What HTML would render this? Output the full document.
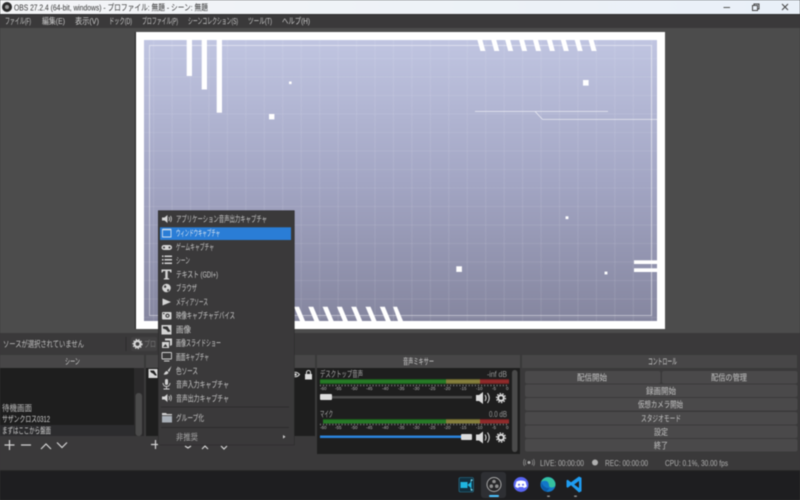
<!DOCTYPE html>
<html lang="ja"><head><meta charset="utf-8"><title>OBS</title>
<style>
html,body{margin:0;padding:0;width:800px;height:500px;overflow:hidden;background:#3a393a}
svg{display:block;filter:blur(.4px)}
text{font-family:"Liberation Sans","Noto Sans CJK JP",sans-serif;font-size:8.5px;fill:#cfcfcf}
.m text{fill:#cbcbcb}
.b text{fill:#c4c4c4;text-anchor:start}
.t text{font-size:4.5px;fill:#b4b4b4}
</style></head><body>
<svg width="800" height="500" viewBox="0 0 800 500" xmlns="http://www.w3.org/2000/svg">
<defs>
<linearGradient id="tb" x1="0" x2="1" y1="0" y2="0"><stop offset="0" stop-color="#f4f5f7"/><stop offset="1" stop-color="#e9f0f8"/></linearGradient>
<linearGradient id="pv" x1="0" x2="0" y1="0" y2="1"><stop offset="0" stop-color="#c0c5e1"/><stop offset=".5" stop-color="#a3a6c4"/><stop offset="1" stop-color="#85869f"/></linearGradient>
<pattern id="gr" x="5.5" y="2.5" width="18.45" height="18.5" patternUnits="userSpaceOnUse"><rect width="1" height="18.5" fill="#fff" fill-opacity=".09"/><rect width="18.45" height="1" fill="#fff" fill-opacity=".08"/></pattern>
</defs>
<rect width="800" height="500" fill="#3a393a"/>
<!-- title bar -->
<rect width="800" height="14" fill="url(#tb)"/>
<rect y="14" width="800" height="1" fill="#2c2c2c"/>
<circle cx="7" cy="7" r="5" fill="#2a2a2a"/><circle cx="7" cy="7" r="2" fill="#999"/>
<text x="14" y="10.5" textLength="194" lengthAdjust="spacingAndGlyphs" style="fill:#333">OBS 27.2.4 (64-bit, windows) - プロファイル: 無題 - シーン: 無題</text>
<path d="M723.5 7.5h6.5" stroke="#555" stroke-width="1"/>
<path d="M752.5 5.5h5v5h-5zM754 5.5V4h5v5h-1.5" fill="none" stroke="#444" stroke-width="1"/>
<path d="M782 4l6 6M788 4l-6 6" stroke="#444" stroke-width="1"/>
<!-- menu bar -->
<g class="m">
<text x="5" y="24" textLength="26" lengthAdjust="spacingAndGlyphs">ファイル(F)</text>
<text x="42" y="24" textLength="23" lengthAdjust="spacingAndGlyphs">編集(E)</text>
<text x="75" y="24" textLength="24" lengthAdjust="spacingAndGlyphs">表示(V)</text>
<text x="109" y="24" textLength="23" lengthAdjust="spacingAndGlyphs">ドック(D)</text>
<text x="142" y="24" textLength="36" lengthAdjust="spacingAndGlyphs">プロファイル(P)</text>
<text x="188" y="24" textLength="50" lengthAdjust="spacingAndGlyphs">シーンコレクション(S)</text>
<text x="248" y="24" textLength="24" lengthAdjust="spacingAndGlyphs">ツール(T)</text>
<text x="282" y="24" textLength="28" lengthAdjust="spacingAndGlyphs">ヘルプ(H)</text>
</g>
<!-- preview area -->
<rect y="28" width="800" height="305" fill="#4c4c4c"/>
<rect x="135" y="32" width="1" height="297" fill="#222"/>
<rect x="136" y="32" width="529" height="297" fill="#fff"/>
<rect x="144" y="40" width="513" height="281" fill="url(#pv)"/>
<rect x="144" y="40" width="513" height="281" fill="url(#gr)"/>
<rect x="149.5" y="45.5" width="502" height="270" fill="none" stroke="#fff" stroke-opacity=".45" stroke-width="1"/>
<g fill="#fff">
<rect x="186.7" y="40" width="5.3" height="36"/><rect x="201.7" y="40" width="5.3" height="49.5"/><rect x="216.7" y="40" width="5.3" height="72.7"/>
<rect x="289" y="81.5" width="2.6" height="2.6"/><rect x="269" y="114" width="5.4" height="5.4"/><rect x="583" y="80" width="5.6" height="5.6"/>
<rect x="456.3" y="266.3" width="5.6" height="5.6"/><rect x="565.6" y="216.3" width="2.8" height="2.8"/><rect x="604.6" y="271.6" width="2.8" height="2.8"/>
<rect x="634" y="260.3" width="23" height="3.7"/><rect x="634" y="268.3" width="23" height="3.7"/>
<path d="M477.4 40h5l3 11h-5zM491.3 40h5l3 11h-5zM505.2 40h5l3 11h-5zM519.1 40h5l3 11h-5zM533 40h5l3 11h-5zM546.9 40h5l3 11h-5zM560.8 40h5l3 11h-5zM574.7 40h5l3 11h-5zM588.6 40h5l3 11h-5z"/>
<path d="M294 306.7h5l6 14.3h-5zM308.3 306.7h5l6 14.3h-5zM322.6 306.7h5l6 14.3h-5zM336.9 306.7h5l6 14.3h-5zM351.2 306.7h5l6 14.3h-5zM365.5 306.7h5l6 14.3h-5zM379.8 306.7h5l6 14.3h-5zM393 306.7h4l6 14.3h-5z"/>
</g>
<path d="M475 111.4h133M535 111.4l7.5 8H657" fill="none" stroke="#fff" stroke-opacity=".7" stroke-width=".8"/>
<!-- context bar -->
<rect y="329" width="800" height="4" fill="#4c4c4c"/>
<rect y="333" width="800" height="137" fill="#3a393a"/>
<text x="3" y="347" textLength="81" lengthAdjust="spacingAndGlyphs" style="fill:#c0c0c0">ソースが選択されていません</text>
<rect x="125.5" y="337" width="1" height="14" fill="#2c2c2c"/>
<rect x="131" y="337" width="26" height="14" rx="2" fill="#424142"/>
<circle cx="137.5" cy="344" r="3" fill="none" stroke="#d8d8d8" stroke-width="2.2"/>
<circle cx="137.5" cy="344" r="4.6" fill="none" stroke="#d8d8d8" stroke-width="1" stroke-dasharray="1.4 1.4"/>
<text x="144" y="347" textLength="12" lengthAdjust="spacingAndGlyphs" style="fill:#777">プロ</text>
<!-- scenes dock -->
<rect x="0" y="355" width="144" height="13" fill="#474647"/>
<text x="65" y="364.5" textLength="15" lengthAdjust="spacingAndGlyphs">シーン</text>
<rect x="0" y="368" width="134" height="68" fill="#1e1e1e"/>
<rect x="134" y="368" width="10" height="68" fill="#2b2a2b"/>
<rect x="135.5" y="393" width="6.5" height="43" rx="3" fill="#4a4a4a"/>
<rect x="0" y="425" width="134" height="11" fill="#2c2c2e"/>
<text x="2" y="411" textLength="30" lengthAdjust="spacingAndGlyphs" style="fill:#bbb">待機画面</text>
<text x="2" y="422" textLength="48" lengthAdjust="spacingAndGlyphs">サザンクロス0312</text>
<text x="2" y="433.5" textLength="49" lengthAdjust="spacingAndGlyphs">まずはここから盤面</text>
<path d="M4.5 445h10M9.5 440v10M21 445h10" stroke="#d4d4d4" stroke-width="1.2"/>
<path d="M41 449l5-5 5 5M57 442.5l5 5 5-5" fill="none" stroke="#d4d4d4" stroke-width="1.2"/>
<!-- sources dock -->
<rect x="146" y="355" width="169" height="13" fill="#474647"/>
<rect x="146" y="368" width="169" height="68" fill="#1e1e1e"/>
<rect x="148.5" y="369" width="9" height="9" fill="#d8d8d8"/><path d="M150 370.5h4l3 5h-2l-2-2-2-1z" fill="#222"/>
<path d="M291.5 374.5q4-4.5 8 0q-4 4.5-8 0z" fill="none" stroke="#ddd" stroke-width="1"/><circle cx="295.5" cy="374.5" r="1.3" fill="#ddd"/>
<rect x="305" y="374" width="7" height="5.5" fill="#ddd"/><path d="M306.5 374v-1.500a2 2 0 0 1 4 0V374" fill="none" stroke="#ddd"/>
<path d="M151 444.5h9M155.5 440v9" stroke="#d4d4d4" stroke-width="1.2"/>
<path d="M185 446l3 2 3-2M202 449l3-3 3 3M221 446l3 3 3-3" fill="none" stroke="#d4d4d4" stroke-width="1.2"/>
<!-- mixer -->
<rect x="317" y="355" width="203" height="13" fill="#474647"/>
<text x="403" y="364.5" textLength="31" lengthAdjust="spacingAndGlyphs">音声ミキサー</text>
<rect x="317" y="368" width="203" height="86" fill="#1e1e1e"/>
<rect x="512" y="370" width="5.5" height="82" rx="2.7" fill="#4a4a4a"/>
<text x="320" y="377" textLength="43" lengthAdjust="spacingAndGlyphs" style="fill:#aaa">デスクトップ音声</text>
<text x="487" y="377" textLength="20" lengthAdjust="spacingAndGlyphs" style="fill:#999">-inf dB</text>
<rect x="320" y="379" width="126" height="5" fill="#267a26"/><rect x="446" y="379" width="34" height="5" fill="#857f3c"/><rect x="480" y="379" width="29" height="5" fill="#8f2b2b"/>
<rect x="320" y="379" width="189" height="1" fill="#000" fill-opacity=".25"/><rect x="320" y="383" width="189" height="1" fill="#000" fill-opacity=".25"/>
<path d="M320 385.5H509" stroke="#999" stroke-width="1.5" stroke-dasharray=".8 2.3"/>
<g class="t">
<text x="320" y="390">-60</text><text x="335" y="390">-55</text><text x="351" y="390">-50</text><text x="366" y="390">-45</text><text x="382" y="390">-40</text><text x="398" y="390">-35</text><text x="413" y="390">-30</text><text x="429" y="390">-25</text><text x="444" y="390">-20</text><text x="460" y="390">-15</text><text x="476" y="390">-10</text><text x="492" y="390">-5</text><text x="506" y="390">0</text>
</g>
<rect x="320" y="396" width="152" height="2.5" fill="#4a4a4a"/>
<rect x="320" y="394" width="12" height="6" rx="1" fill="#dcdcdc"/>
<path d="M476 395h3l4-3v12l-4-3h-3z" fill="#dcdcdc"/><path d="M485 395q2 3 0 6M487.5 393q3.5 5 0 10" fill="none" stroke="#dcdcdc" stroke-width="1"/>
<circle cx="501" cy="398" r="2.8" fill="none" stroke="#dcdcdc" stroke-width="2"/><circle cx="501" cy="398" r="4.5" fill="none" stroke="#dcdcdc" stroke-width="1.2" stroke-dasharray="1.5 1.3"/>
<text x="320" y="417" textLength="13" lengthAdjust="spacingAndGlyphs" style="fill:#aaa">マイク</text>
<text x="489" y="417" textLength="18" lengthAdjust="spacingAndGlyphs" style="fill:#999">0.0 dB</text>
<rect x="323" y="419" width="123" height="4.5" fill="#267a26"/><rect x="446" y="419" width="34" height="4.5" fill="#857f3c"/><rect x="480" y="419" width="29" height="4.5" fill="#8f2b2b"/>
<rect x="323" y="419" width="186" height="1" fill="#000" fill-opacity=".25"/>
<path d="M320 424.5H509" stroke="#999" stroke-width="1.5" stroke-dasharray=".8 2.3"/>
<g class="t">
<text x="320" y="429">-60</text><text x="335" y="429">-55</text><text x="351" y="429">-50</text><text x="366" y="429">-45</text><text x="382" y="429">-40</text><text x="398" y="429">-35</text><text x="413" y="429">-30</text><text x="429" y="429">-25</text><text x="444" y="429">-20</text><text x="460" y="429">-15</text><text x="476" y="429">-10</text><text x="492" y="429">-5</text><text x="506" y="429">0</text>
</g>
<rect x="320" y="435.5" width="142" height="2.5" fill="#2a82da"/>
<rect x="461" y="434" width="11" height="6" rx="1" fill="#dcdcdc"/>
<path d="M476 434.5h3l4-3v12l-4-3h-3z" fill="#dcdcdc"/><path d="M485 434.5q2 3 0 6M487.5 432.5q3.5 5 0 10" fill="none" stroke="#dcdcdc" stroke-width="1"/>
<circle cx="501" cy="437.5" r="2.8" fill="none" stroke="#dcdcdc" stroke-width="2"/><circle cx="501" cy="437.5" r="4.5" fill="none" stroke="#dcdcdc" stroke-width="1.2" stroke-dasharray="1.5 1.3"/>
<!-- controls -->
<rect x="522" y="355" width="275" height="13" fill="#474647"/>
<text x="648" y="364.5" textLength="29" lengthAdjust="spacingAndGlyphs">コントロール</text>
<g fill="#4a494a">
<rect x="525" y="371" width="135.5" height="12.5" rx="2"/><rect x="662" y="371" width="135.5" height="12.5" rx="2"/>
<rect x="525" y="384.5" width="272.5" height="12.5" rx="2"/><rect x="525" y="398" width="272.5" height="12.5" rx="2"/><rect x="525" y="412" width="272.5" height="12.5" rx="2"/><rect x="525" y="425.5" width="272.5" height="12.5" rx="2"/><rect x="525" y="439" width="272.5" height="12.5" rx="2"/>
</g>
<g class="b">
<text x="577" y="380.5" textLength="30" lengthAdjust="spacingAndGlyphs">配信開始</text>
<text x="711" y="380.5" textLength="36" lengthAdjust="spacingAndGlyphs">配信の管理</text>
<text x="646" y="394" textLength="30" lengthAdjust="spacingAndGlyphs">録画開始</text>
<text x="638" y="407.5" textLength="45" lengthAdjust="spacingAndGlyphs">仮想カメラ開始</text>
<text x="641" y="421.5" textLength="40" lengthAdjust="spacingAndGlyphs">スタジオモード</text>
<text x="654" y="435" textLength="14" lengthAdjust="spacingAndGlyphs">設定</text>
<text x="654" y="448.5" textLength="14" lengthAdjust="spacingAndGlyphs">終了</text>
</g>
<!-- status bar -->
<circle cx="529" cy="462.5" r="1.5" fill="#aaa"/><path d="M526 460q-1.500 2.500 0 5M532 460q1.500 2.500 0 5M524.500 459q-2 3.500 0 7M533.500 459q2 3.500 0 7" fill="none" stroke="#999" stroke-width=".7"/>
<text x="540" y="466" textLength="44" lengthAdjust="spacingAndGlyphs" style="fill:#b0b0b0">LIVE: 00:00:00</text>
<circle cx="595" cy="462.5" r="3" fill="#b0b0b0"/>
<text x="605" y="466" textLength="43" lengthAdjust="spacingAndGlyphs" style="fill:#b0b0b0">REC: 00:00:00</text>
<text x="665" y="466" textLength="63" lengthAdjust="spacingAndGlyphs" style="fill:#b0b0b0">CPU: 0.1%, 30.00 fps</text>
<!-- context menu -->
<rect x="158.3" y="210.7" width="136" height="234.3" fill="#3a393a"/>
<rect x="158.3" y="210.7" width="136" height="234.3" fill="none" stroke="#2b2b2b" stroke-width=".6"/>
<rect x="160" y="227.3" width="131" height="12.7" fill="#2a7dd6"/>
<g class="m">
<text x="176" y="222" textLength="91" lengthAdjust="spacingAndGlyphs">アプリケーション音声出力キャプチャ</text>
<text x="176" y="236" textLength="44" lengthAdjust="spacingAndGlyphs" style="fill:#dfe8f2">ウィンドウキャプチャ</text>
<text x="176" y="250" textLength="38" lengthAdjust="spacingAndGlyphs">ゲームキャプチャ</text>
<text x="176" y="263.5" textLength="14" lengthAdjust="spacingAndGlyphs">シーン</text>
<text x="176" y="277.5" textLength="42" lengthAdjust="spacingAndGlyphs">テキスト (GDI+)</text>
<text x="176" y="291" textLength="21" lengthAdjust="spacingAndGlyphs">ブラウザ</text>
<text x="176" y="305" textLength="32" lengthAdjust="spacingAndGlyphs">メディアソース</text>
<text x="176" y="318.5" textLength="59" lengthAdjust="spacingAndGlyphs">映像キャプチャデバイス</text>
<text x="176" y="332.5" textLength="15" lengthAdjust="spacingAndGlyphs">画像</text>
<text x="176" y="346" textLength="45" lengthAdjust="spacingAndGlyphs">画像スライドショー</text>
<text x="176" y="360" textLength="33" lengthAdjust="spacingAndGlyphs">画面キャプチャ</text>
<text x="176" y="374" textLength="22" lengthAdjust="spacingAndGlyphs">色ソース</text>
<text x="176" y="387.5" textLength="53" lengthAdjust="spacingAndGlyphs">音声入力キャプチャ</text>
<text x="176" y="401.5" textLength="53" lengthAdjust="spacingAndGlyphs">音声出力キャプチャ</text>
<text x="176" y="421" textLength="28" lengthAdjust="spacingAndGlyphs">グループ化</text>
<text x="176" y="440" textLength="22" lengthAdjust="spacingAndGlyphs" style="fill:#aaa">非推奨</text>
</g>
<rect x="161" y="406.5" width="128" height="1" fill="#2c2c2c"/>
<rect x="161" y="427" width="128" height="1" fill="#2c2c2c"/>
<path d="M283 435l2.500 1.800-2.500 1.800z" fill="#ccc"/>
<!-- menu icons -->
<g fill="#d4d4d4">
<path d="M162 217.500h2.500l3-2.500v8l-3-2.500H162z"/><path d="M169 217q1 2 0 4M170.500 216q1.800 3 0 6" fill="none" stroke="#d4d4d4" stroke-width=".8"/>
<path d="M162.500 229.500h8.500v7.500h-8.500z" fill="none" stroke="#c9dcf0" stroke-width=".9"/><path d="M162.500 229.500h8.500" stroke="#c9dcf0" stroke-width="1.600"/>
<rect x="161.500" y="245" width="10.500" height="5" rx="2.500"/><circle cx="164" cy="247.500" r="1" fill="#3a393a"/><circle cx="169.500" cy="247.500" r="1" fill="#3a393a"/>
<path d="M162 255.500h1.500v1.500H162zM164.500 255.500h7.500v1.500h-7.500zM162 259h1.500v1.500H162zM164.500 259h7.500v1.500h-7.500zM162 262.500h1.500v1.500H162zM164.500 262.500h7.500v1.500h-7.500z"/>
<path d="M161.500 269.500h10v3h-1l-.8-1.500h-2v7l1.500.5v1h-5.400v-1l1.500-.5v-7h-2l-.8 1.500h-1z"/>
<circle cx="166.500" cy="288" r="4.300"/><path d="M165 285l1.500 1.500-1 1.500-1.800-.7zM167.500 289l1.800.5-1 2.200-1.300-1z" fill="#3a393a"/>
<path d="M162.500 298.500l8.500 3.500-8.500 3.500z"/>
<rect x="162" y="312" width="9.500" height="7.500" rx="1"/><circle cx="167.500" cy="315.700" r="2.100" fill="#3a393a"/><circle cx="167.500" cy="315.700" r="1" fill="#d4d4d4"/><rect x="163" y="313" width="1.500" height="1.200" fill="#3a393a"/>
<rect x="161.500" y="325" width="10" height="9.500"/><path d="M163 326.500h4.500l3 5-2.500.5-2-2.500-3-1z" fill="#333"/>
<path d="M165 338.500h7v6.500l-2 1v-5.500h-5z"/><path d="M162 342h7v6h-7z"/><path d="M163 347l2.500-3 2 3z" fill="#333"/>
<rect x="162" y="352.500" width="9.500" height="6.500" rx=".5" fill="none" stroke="#d4d4d4" stroke-width=".9"/><path d="M164 361h5.500" stroke="#d4d4d4" stroke-width="1"/>
<path d="M171.500 366l-3.800 4.500 1.500 1.500zM167 371l1.500 1.500c-.5 2-3 2.500-5 2 1.200-.8 1-3 3.500-3.500z"/>
<rect x="165" y="379" width="3" height="6" rx="1.500"/><path d="M163 383q.3 3.500 3.500 3.500t3.500-3.500M166.500 386.500v2M163.500 389h6" fill="none" stroke="#d4d4d4" stroke-width=".9"/>
<path d="M162 396.500h2.500l3-2.500v8l-3-2.500H162z"/><path d="M169 396q1 2 0 4M170.500 395q1.800 3 0 6" fill="none" stroke="#d4d4d4" stroke-width=".8"/>
<path d="M162 413h4l1 1h5v1.300h-10z"/><path d="M162 416h10v6.500h-10z" fill="#a9b0b8"/>
</g>
<!-- taskbar -->
<rect y="470" width="800" height="30" fill="#1e1e20"/>
<rect x="0" y="470" width="800" height=".8" fill="#2c2c2c"/>
<rect x="481" y="472" width="25" height="26" rx="3" fill="#2e2f33"/>
<rect x="489" y="495" width="10" height="2" rx="1" fill="#4cc2ff"/>
<rect x="459" y="477.5" width="14.5" height="14.5" rx="1.5" fill="#12303f" stroke="#2a7f9e" stroke-width=".6"/>
<path d="M460.500 482h7v6h-7z" fill="#1fb6e0"/><path d="M467.500 485l4-3.500v7z" fill="#1fb6e0"/><path d="M471 479l2 1-2.500 2zM471 491l2-1-2.500-2z" fill="#7be0f5"/>
<circle cx="494" cy="484.5" r="7" fill="#262628" stroke="#a8a8a8" stroke-width="1"/>
<circle cx="494" cy="481.5" r="1.8" fill="#8f8f8f"/><circle cx="491.300" cy="486.200" r="1.800" fill="#8f8f8f"/><circle cx="496.800" cy="486.200" r="1.800" fill="#8f8f8f"/><circle cx="494" cy="484.500" r="1.300" fill="#262628"/>
<circle cx="521" cy="484.5" r="7.5" fill="#5865f2"/>
<path d="M516.500 481.500q4.500-2 9 0l1.300 5q-1.500 1.200-3 1.500l-.7-1h-4.200l-.7 1q-1.500-.3-3-1.500z" fill="#fff"/><circle cx="519" cy="484.700" r="1" fill="#5865f2"/><circle cx="523" cy="484.700" r="1" fill="#5865f2"/>
<circle cx="548" cy="484.5" r="7.5" fill="#1277c8"/>
<path d="M541 482a7.500 7.500 0 0 1 14.500 2.800c0 1.600-1.500 2.700-3.500 2.700-2 0-3-.8-3-1.800 0-3-1.500-5-4-5-1.800 0-3.200.5-4 1.300z" fill="#35c2a0"/>
<path d="M546 491.500a7.500 7.500 0 0 1-4.500-9c1 3 3.500 5.500 8 5.800-1 1-2 2.500-3.500 3.200z" fill="#0b5aa8"/>
<rect x="547" y="495.5" width="3" height="1.5" rx=".7" fill="#8f8f8f"/>
<path d="M579 476.500l2.500 1.300v13.400l-2.500 1.300-8-7.300-3.300 2.500-1.200-.7v-6.600l1.200-.7 3.300 2.500zM579 481l-4.800 3.500 4.800 3.500z" fill="#1f9cf0"/>
<rect x="574" y="495.5" width="3" height="1.5" rx=".7" fill="#8f8f8f"/>
</svg>
</body></html>
